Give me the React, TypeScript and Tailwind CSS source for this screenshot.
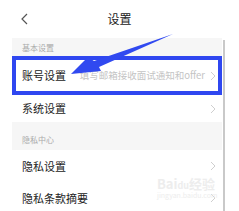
import React from "react";

const font = { fontFamily: '"Noto Sans CJK SC", "Noto Sans", sans-serif' };

function Chevron() {
  return (
    <svg width="6" height="10" viewBox="0 0 6 10" className="shrink-0">
      <path d="M1 1l4 4-4 4" fill="none" stroke="#cfcfcf" strokeWidth="1" />
    </svg>
  );
}

function Row({ label, h = "h-[32px]" }: { label: string; h?: string }) {
  return (
    <div className={`${h} flex items-center justify-between pl-[10px] pr-[6px]`}>
      <span className="text-[11px] text-[#222] leading-none">{label}</span>
      <Chevron />
    </div>
  );
}

export default function App() {
  return (
    <div className="w-[239px] h-[211px] bg-white relative overflow-hidden" style={font}>
      <div className="h-[38px] grid grid-cols-[1fr_auto_1fr] items-center">
        <svg width="7" height="12" viewBox="0 0 7 12" className="ml-[21px]">
          <path d="M6 1L1 6l5 5" fill="none" stroke="#555" strokeWidth="1.2" />
        </svg>
        <span className="text-[12px] text-[#222] leading-none">设置</span>
        <span />
      </div>
      <div className="ml-[12px] w-[210px]">
        <div className="h-[18px] bg-[#f6f6f6] flex items-end pb-[4px] pl-[10px]">
          <span className="text-[8px] text-[#aaa] leading-none">基本设置</span>
        </div>
        <div className="h-[39px] border-[4px] border-[#2f47f0] flex items-center justify-between pl-[6px] pr-[2px]">
          <span className="text-[11px] text-[#222] leading-none">账号设置</span>
          <div className="flex items-center gap-[5px]">
            <span className="text-[9.5px] text-[#c4c4c4] leading-none">填写邮箱接收面试通知和offer</span>
            <Chevron />
          </div>
        </div>
        <Row label="系统设置" h="h-[27px]" />
        <div className="h-[28px] bg-[#f6f6f6] flex items-end pb-[6px] pl-[10px]">
          <span className="text-[8px] text-[#aaa] leading-none">隐私中心</span>
        </div>
        <Row label="隐私设置" />
        <Row label="隐私条款摘要" />
      </div>
      <div className="absolute left-[223px] top-[40px] w-[2px] h-[171px] bg-[#c9c9c9]" />
      <div className="absolute left-[157px] top-[177px] flex flex-col gap-[2px] text-[#ededed] leading-none pointer-events-none">
        <span className="text-[13px] font-bold">Bai<span className="text-[9px]">du</span>经验</span>
        <span className="text-[7px]">jingyan.baidu.com</span>
      </div>
      <svg className="absolute left-0 top-0" width="239" height="211" viewBox="0 0 239 211">
        <polygon points="71,74 88,57 94,61 173,34 99,67 101,71" fill="#3049f0" />
      </svg>
    </div>
  );
}
